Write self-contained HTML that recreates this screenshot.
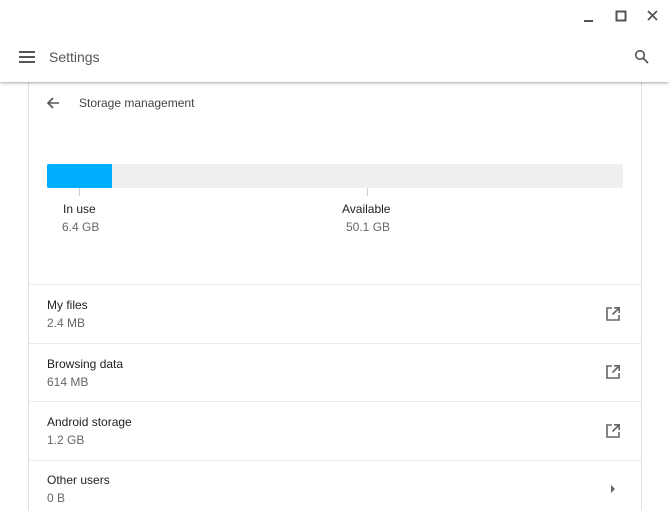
<!DOCTYPE html><html><head><style>
*{margin:0;padding:0;box-sizing:border-box}
body{width:669px;height:499px;overflow:hidden;background:#fff;font-family:"Liberation Sans",sans-serif;position:relative;color:#333}
.a{position:absolute}
.t{font-size:12px;color:#222}
.s{font-size:12px;color:#666}
.sep{position:absolute;left:29px;width:612px;height:1px;background:#ebebeb}
</style></head><body>
<div class="a" style="left:0;top:0;width:669px;height:82px;background:#fff;box-shadow:0 1px 3px rgba(0,0,0,.35);z-index:2"></div>
<svg class="a" style="left:580px;top:8px;z-index:3" width="85" height="16">
<rect x="4" y="12" width="9" height="2" fill="#555"/>
<rect x="36.5" y="3.5" width="9" height="9" fill="none" stroke="#555" stroke-width="2"/>
<path d="M68 3l9 9M77 3l-9 9" stroke="#555" stroke-width="1.8"/>
</svg>
<svg class="a" style="left:19px;top:50px;z-index:3" width="16" height="14"><rect y="1" width="16" height="2" fill="#555"/><rect y="6" width="16" height="2" fill="#555"/><rect y="11" width="16" height="2" fill="#555"/></svg>
<div class="a" style="left:49px;top:49px;font-size:14px;color:#555;z-index:3">Settings</div>
<svg class="a" style="left:634px;top:49px;z-index:3" width="16" height="16"><circle cx="6" cy="6" r="4.3" fill="none" stroke="#555" stroke-width="1.6"/><path d="M9 9l5 5" stroke="#555" stroke-width="1.8"/></svg>
<div class="a" style="left:28px;top:80px;width:614px;height:430px;border-left:1px solid #e0e0e0;border-right:1px solid #e0e0e0"></div>
<svg class="a" style="left:46px;top:96px" width="14" height="14"><path d="M13 7H2M7 2L2 7l5 5" fill="none" stroke="#555" stroke-width="1.6"/></svg>
<div class="a" style="left:79px;top:96px;font-size:12px;color:#444">Storage management</div>
<div class="a" style="left:47px;top:164px;width:576px;height:24px;background:#efefef;border-radius:2px"></div>
<div class="a" style="left:47px;top:164px;width:65px;height:24px;background:#00aeff;border-radius:2px 0 0 2px"></div>
<div class="a" style="left:79px;top:188px;width:1px;height:8px;background:#ccc"></div>
<div class="a" style="left:367px;top:188px;width:1px;height:8px;background:#ccc"></div>
<div class="a t" style="left:63px;top:202px">In use</div>
<div class="a s" style="left:62px;top:220px">6.4 GB</div>
<div class="a t" style="left:342px;top:202px">Available</div>
<div class="a s" style="left:346px;top:220px">50.1 GB</div>
<div class="sep" style="top:284px"></div>
<div class="sep" style="top:343px"></div>
<div class="sep" style="top:401px"></div>
<div class="sep" style="top:460px"></div>
<div class="a t" style="left:47px;top:298px">My files</div><div class="a s" style="left:47px;top:316px">2.4 MB</div>
<div class="a t" style="left:47px;top:357px">Browsing data</div><div class="a s" style="left:47px;top:375px">614 MB</div>
<div class="a t" style="left:47px;top:415px">Android storage</div><div class="a s" style="left:47px;top:433px">1.2 GB</div>
<div class="a t" style="left:47px;top:473px">Other users</div><div class="a s" style="left:47px;top:491px">0 B</div>
<svg class="a" style="left:605px;top:306px" width="16" height="16"><path d="M7 2H2v12h12V9" fill="none" stroke="#666" stroke-width="1.6"/><path d="M9 1.8h5.2V7M14 2L7.5 8.5" fill="none" stroke="#666" stroke-width="1.6"/></svg>
<svg class="a" style="left:605px;top:364px" width="16" height="16"><path d="M7 2H2v12h12V9" fill="none" stroke="#666" stroke-width="1.6"/><path d="M9 1.8h5.2V7M14 2L7.5 8.5" fill="none" stroke="#666" stroke-width="1.6"/></svg>
<svg class="a" style="left:605px;top:423px" width="16" height="16"><path d="M7 2H2v12h12V9" fill="none" stroke="#666" stroke-width="1.6"/><path d="M9 1.8h5.2V7M14 2L7.5 8.5" fill="none" stroke="#666" stroke-width="1.6"/></svg>
<svg class="a" style="left:610px;top:484px" width="6" height="10"><path d="M1 1l4 4-4 4z" fill="#666"/></svg>
</body></html>
